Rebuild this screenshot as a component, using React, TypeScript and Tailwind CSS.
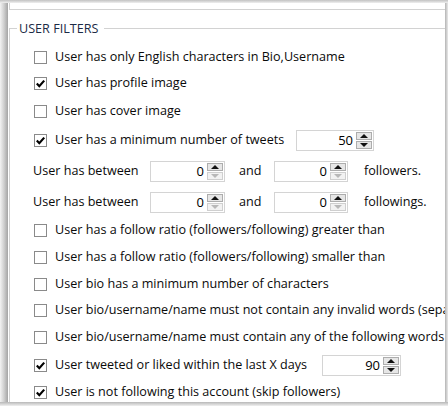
import React from 'react';

// Windows-style "USER FILTERS" group box inside a shadowed window frame.

const font = { fontFamily: '"Open Sans", "Noto Sans", sans-serif' };

const Check: React.FC<{ checked?: boolean }> = ({ checked }) => (
  <span className="w-[13px] h-[13px] border border-[#8a8a8a] bg-white flex items-center justify-center shrink-0">
    {checked && (
      <svg width="11" height="11" viewBox="0 0 11 11">
        <path d="M1.8 5.6 L4.3 8.2 L9.2 2.6" fill="none" stroke="#000" strokeWidth="2.2" />
      </svg>
    )}
  </span>
);

const Arrow: React.FC<{ up?: boolean; off?: boolean }> = ({ up, off }) => (
  <svg width="8" height="4" viewBox="0 0 8 4">
    <path d={up ? 'M0 4 L4 0 L8 4Z' : 'M0 0 L4 4 L8 0Z'} fill={off ? '#b8b8b8' : '#111'} />
  </svg>
);

const NumBox: React.FC<{ value: number; w: string; downOff?: boolean }> = ({ value, w, downOff }) => (
  <div className={`${w} h-[21px] border border-[#d4d4d4] bg-white flex items-center justify-end gap-[3px] pr-[1px] shrink-0`}>
    <span className="text-[13px] leading-none text-black">{value}</span>
    <div className="flex flex-col w-[16px] h-[17px] gap-[1px]">
      <div className="flex-1 border border-[#adadad] bg-[#e6e6e6] flex items-center justify-center">
        <Arrow up />
      </div>
      <div
        className={
          'flex-1 border flex items-center justify-center ' +
          (downOff ? 'border-[#cfcfcf] bg-[#f2f2f2]' : 'border-[#adadad] bg-[#e6e6e6]')
        }
      >
        <Arrow off={downOff} />
      </div>
    </div>
  </div>
);

const CheckRow: React.FC<{ h: string; checked?: boolean; children: React.ReactNode }> = ({ h, checked, children }) => (
  <div className={`${h} flex items-center pl-[24px] whitespace-nowrap`}>
    <Check checked={checked} />
    <span className="ml-[8px]">{children}</span>
  </div>
);

const BetweenRow: React.FC<{ h: string; tail: string }> = ({ h, tail }) => (
  <div className={`${h} flex items-center pl-[23px] whitespace-nowrap`}>
    <span className="w-[117px] shrink-0">User has between</span>
    <NumBox value={0} w="w-[75px]" downOff />
    <span className="ml-[14px] w-[35px] shrink-0">and</span>
    <NumBox value={0} w="w-[74px]" downOff />
    <span className="ml-[16px]">{tail}</span>
  </div>
);

export default function App() {
  return (
    <div className="w-[448px] h-[406px] flex flex-col bg-white text-[12.6px] text-[#0a0a0a] overflow-hidden" style={font}>
      <div className="h-[3px] shrink-0 bg-linear-to-b from-[#c2c2c2] to-[#efefef]" />
      <div className="flex-1 flex min-h-0">
        <div className="w-[8px] shrink-0 bg-linear-to-r from-[#f3f3f3] via-[#cfcfcf] to-[#a4a4a4]" />
        <div className="flex-1 min-w-0 overflow-hidden bg-white">
          {/* bottom edge of the group above */}
          <div className="ml-[1px] w-[520px] h-[7px] border-l border-b border-[#d2d2d2]" />

          <fieldset className="ml-[1px] mt-[9px] w-[520px] h-[420px] border border-[#d2d2d2]">
            <legend className="ml-[7px] px-[2px] pr-[6px] leading-[19px] text-[#1c2b45]">USER FILTERS</legend>
            <div className="pt-[6px]">
              <CheckRow h="h-[26px]">User has only English characters in Bio,Username</CheckRow>
              <CheckRow h="h-[27px]" checked>User has profile image</CheckRow>
              <CheckRow h="h-[28px]">User has cover image</CheckRow>
              <div className="h-[31px] flex items-center pl-[24px] whitespace-nowrap">
                <Check checked />
                <span className="ml-[8px] w-[241px] shrink-0">User has a minimum number of tweets</span>
                <NumBox value={50} w="w-[78px]" />
              </div>
              <BetweenRow h="h-[31px]" tail="followers." />
              <BetweenRow h="h-[30px]" tail="followings." />
              <CheckRow h="h-[27px]">User has a follow ratio (followers/following) greater than</CheckRow>
              <CheckRow h="h-[27px]">User has a follow ratio (followers/following) smaller than</CheckRow>
              <CheckRow h="h-[26px]">User bio has a minimum number of characters</CheckRow>
              <CheckRow h="h-[27px]">User bio/username/name must not contain any invalid words (separated by comma)</CheckRow>
              <CheckRow h="h-[27px]">User bio/username/name must contain any of the following words (separated by comma)</CheckRow>
              <div className="h-[28px] flex items-center pl-[24px] whitespace-nowrap">
                <Check checked />
                <span className="ml-[8px] w-[267px] shrink-0">User tweeted or liked within the last X days</span>
                <NumBox value={90} w="w-[79px]" />
              </div>
              <CheckRow h="h-[27px]" checked>User is not following this account (skip followers)</CheckRow>
            </div>
          </fieldset>
        </div>
        <div className="w-[3px] shrink-0 bg-linear-to-r from-[#b4b4b4] to-[#e9e9e9]" />
      </div>
      <div className="h-[4px] shrink-0 bg-linear-to-b from-[#b8b8b8] to-[#f0f0f0]" />
    </div>
  );
}
